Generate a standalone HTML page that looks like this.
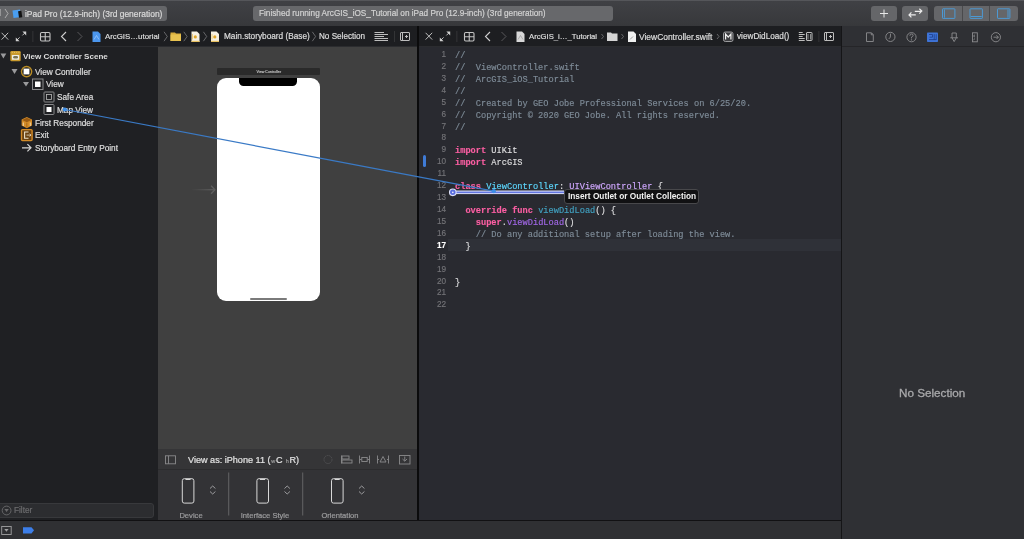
<!DOCTYPE html>
<html><head><meta charset="utf-8">
<style>
*{margin:0;padding:0;box-sizing:border-box}
html,body{width:1024px;height:539px;overflow:hidden;background:#2c2c2e;font-family:"Liberation Sans",sans-serif;position:relative}
.a{position:absolute}
svg{position:absolute;overflow:visible}
.t{position:absolute;will-change:transform;-webkit-text-stroke-width:0.2px;white-space:pre;color:#dcdcdc;font-size:8.2px;line-height:10px}
#tb{left:0;top:0;width:1024px;height:26px;background:linear-gradient(#404145,#37383b);}
.btn{position:absolute;background:#656669;border-radius:3px}
.jb{position:absolute;background:#1d1e21;height:20px;top:26px}
#nav{left:0;top:47px;width:158px;height:473px;background:#1f2023}
#canvas{left:158px;top:47px;width:259px;height:402px;background:#404040}
#code{left:419px;top:47px;width:422px;height:474px;background:#292a30}
#insp{left:842px;top:26px;width:182px;height:513px;background:#2f3034}
#bot{left:0;top:520px;width:841px;height:19px;background:#2f3033}
.mono{position:absolute;will-change:transform;-webkit-text-stroke-width:0.15px;font-family:"Liberation Mono",monospace;font-size:8.675px;line-height:12px;white-space:pre;color:#dfdfe0}
.ln{position:absolute;will-change:transform;-webkit-text-stroke-width:0.15px;font-size:8.2px;line-height:12px;color:#747478;text-align:right;width:40px;left:406px}
.cm{color:#7f8c98}
.kw{color:#fc5fa3;font-weight:bold}
.td{color:#5dd8ff}
.oc{color:#d0a8ff}
.od{color:#41a1c0}
.of{color:#a167e6}
.row{position:absolute;will-change:transform;-webkit-text-stroke-width:0.2px;white-space:pre;color:#dedede;font-size:8.2px;line-height:12px}
</style></head><body>
<!-- toolbar -->
<div id="tb" class="a">
  <div class="a" style="left:0;top:0;width:1024px;height:1px;background:#55565a"></div>
  <div class="btn" style="left:-4px;top:6px;width:171px;height:15px"></div>
  <div class="t" style="left:-1px;top:9px;color:#cfcfcf">l</div>
  <svg style="left:0;top:0" width="30" height="26"><path d="M5 9 L8 13.5 L5 18" fill="none" stroke="#bdbdbd" stroke-width="0.8"/>
    <path d="M12.5 10.5 L20 9.5 L21 17 L13.5 18 Z" fill="#4a9ef0"/><rect x="18.5" y="11" width="3.3" height="6.5" fill="#111" transform="rotate(-8 20 14)"/></svg>
  <div class="t" style="left:25px;top:8.8px;font-size:8.45px;color:#dadada">iPad Pro (12.9-inch) (3rd generation)</div>
  <div class="btn" style="left:253px;top:6px;width:360px;height:15px;background:#67686b"></div>
  <div class="t" style="left:258.5px;top:8.8px;font-size:8.23px;color:#d2d2d2">Finished running ArcGIS_iOS_Tutorial on iPad Pro (12.9-inch) (3rd generation)</div>
  <div class="btn" style="left:871px;top:6px;width:26px;height:15px"></div>
  <svg style="left:871px;top:6px" width="26" height="15"><path d="M13 3.5 V11.5 M9 7.5 H17" stroke="#e8e8e8" stroke-width="1"/></svg>
  <div class="btn" style="left:902px;top:6px;width:26px;height:15px"></div>
  <svg style="left:902px;top:3px" width="26" height="18"><path d="M12.8 8.3 L19.8 8.1 M17.3 5.8 L19.8 8.1 L17.3 10.6 M13.8 11.8 L7 11.9 M9.4 9.4 L7 11.9 L9.4 14.4" fill="none" stroke="#ececec" stroke-width="1.2"/></svg>
  <div class="btn" style="left:934px;top:6px;width:84px;height:15px"></div>
  <div class="a" style="left:962px;top:6px;width:1px;height:15px;background:#4a4a4c"></div>
  <div class="a" style="left:989px;top:6px;width:1px;height:15px;background:#4a4a4c"></div>
  <svg style="left:934px;top:6px" width="84" height="15">
    <g fill="none" stroke="#4a9fe0" stroke-width="0.9">
    <rect x="8.5" y="2.8" width="12.4" height="9.6" rx="0.6"/><path d="M10.4 3.5 V11.7"/>
    <rect x="36" y="2.8" width="12.4" height="9.6" rx="0.6"/><path d="M36.7 10.5 H47.7"/>
    <rect x="63.5" y="2.8" width="12.4" height="9.6" rx="0.6"/><path d="M74 3.5 V11.7"/></g>
  </svg>
</div>
<div class="a" style="left:0;top:25.5px;width:1024px;height:1px;background:#151517"></div>

<!-- left jump bar -->
<div class="jb" style="left:0;width:417px"></div>
<div class="a" style="left:0;top:46px;width:417px;height:1px;background:#2b2c2f"></div>
<svg style="left:0;top:26px" width="417" height="20">
  <g fill="none" stroke="#cfcfcf" stroke-width="0.9">
    <path d="M1.6 6.8 L8.2 13.6 M8.2 6.8 L1.6 13.6"/>
    <path d="M16.6 14.4 L19.6 11.4 M25.4 6.4 L22.4 9.4"/>
    <path d="M66 6 L61.5 10.5 L66 15" stroke-width="1.1"/>
  </g>
  <g fill="#cfcfcf"><path d="M15.8 15.2 V11.4 L19.6 15.2 Z M26.2 5.6 V9.4 L22.4 5.6 Z"/></g>
  <g fill="none" stroke="#c4c4c4" stroke-width="1.1">
    <rect x="40.5" y="6.5" width="9.5" height="8.5" rx="1.2"/><path d="M40.5 10.75 H50 M45.25 6.5 V15"/>
  </g>
  <path d="M77.5 6 L82 10.5 L77.5 15" fill="none" stroke="#5e5e60" stroke-width="0.9"/>
  <rect x="32.5" y="5" width="0.8" height="11" fill="#3a3a3c"/>
  <path d="M92.5 5.5 H98 L100.5 8 V16 H92.5 Z" fill="#4b96ee"/><path d="M94 13.5 L96.5 9.5 L99 13.5" fill="none" stroke="#a8d0ff" stroke-width="0.7"/>
</svg>
<div class="t" style="left:105px;top:32.2px;font-size:7.85px">ArcGIS…utorial</div>
<svg style="left:0;top:26px" width="417" height="20">
  <g fill="none" stroke="#7a7a7c" stroke-width="0.8">
    <path d="M164 5.8 L167.3 10.5 L164 15.2"/><path d="M183.8 5.8 L187.1 10.5 L183.8 15.2"/><path d="M203.4 5.8 L206.7 10.5 L203.4 15.2"/><path d="M312.3 5.8 L315.6 10.5 L312.3 15.2"/>
  </g>
  <path d="M170.5 6.5 H175 L176 7.5 H181 V15 H170.5 Z" fill="#d9ad3c"/><path d="M170.5 8.5 H181 V15 H170.5 Z" fill="#e8c250"/>
  <path d="M191.5 5.5 H197 L199.5 8 V16 H191.5 Z" fill="#f6f0e2"/><path d="M191.5 14.8 H199.5 V16 H191.5 Z" fill="#e8c060"/><circle cx="195.3" cy="10.9" r="1.6" fill="#dfa52a"/><path d="M192.5 8 V13.5" stroke="#e8c060" stroke-width="0.8"/>
  <path d="M211 5.5 H216.5 L219 8 V16 H211 Z" fill="#f6f0e2"/><path d="M211 14.8 H219 V16 H211 Z" fill="#e8c060"/><circle cx="214.8" cy="10.9" r="1.6" fill="#dfa52a"/><path d="M212 8 V13.5" stroke="#e8c060" stroke-width="0.8"/>
  <g fill="none" stroke="#bdbdbd" stroke-width="1">
    <path d="M374.5 6.5 H384 M374.5 8.5 H388 M374.5 10.5 H384 M374.5 12.5 H388 M374.5 14.5 H388"/>
    <rect x="400.5" y="6.5" width="9" height="8" rx="0.5"/><path d="M402.5 6.5 V14.5 M405 10.5 H408 M406.5 9 V12"/>
  </g>
  <rect x="394" y="5" width="0.8" height="11" fill="#3a3a3c"/>
</svg>
<div class="t" style="left:223.5px;top:32.2px;font-size:8.25px">Main.storyboard (Base)</div>
<div class="t" style="left:319px;top:32.2px;font-size:8.15px">No Selection</div>

<!-- right jump bar -->
<div class="jb" style="left:419px;width:422px"></div>
<div class="a" style="left:419px;top:46px;width:422px;height:1px;background:#2b2c2f"></div>
<svg style="left:424px;top:26px" width="417" height="20">
  <g fill="none" stroke="#cfcfcf" stroke-width="0.9">
    <path d="M1.6 6.8 L8.2 13.6 M8.2 6.8 L1.6 13.6"/>
    <path d="M16.6 14.4 L19.6 11.4 M25.4 6.4 L22.4 9.4"/>
    <path d="M66 6 L61.5 10.5 L66 15" stroke-width="1.1"/>
  </g>
  <g fill="#cfcfcf"><path d="M15.8 15.2 V11.4 L19.6 15.2 Z M26.2 5.6 V9.4 L22.4 5.6 Z"/></g>
  <g fill="none" stroke="#c4c4c4" stroke-width="1.1">
    <rect x="40.5" y="6.5" width="9.5" height="8.5" rx="1.2"/><path d="M40.5 10.75 H50 M45.25 6.5 V15"/>
  </g>
  <path d="M77.5 6 L82 10.5 L77.5 15" fill="none" stroke="#5e5e60" stroke-width="0.9"/>
  <rect x="32.5" y="5" width="0.8" height="11" fill="#3a3a3c"/>
  <path d="M92.5 5.5 H98 L100.5 8 V16 H92.5 Z" fill="#d8d8d8"/><path d="M94 13.5 L96.5 9.5 L99 13.5" fill="none" stroke="#999" stroke-width="0.7"/>
</svg>
<div class="t" style="left:529px;top:32.2px;font-size:7.7px">ArcGIS_i…_Tutorial</div>
<svg style="left:0;top:26px" width="842" height="20">
  <g fill="none" stroke="#7a7a7c" stroke-width="0.8">
    <path d="M601.5 8 L603.5 10.5 L601.5 13"/><path d="M621.5 8 L623.5 10.5 L621.5 13"/><path d="M717 8 L719 10.5 L717 13"/>
  </g>
  <path d="M607 6.5 H611 L612 7.5 H617.5 V15 H607 Z" fill="#d5d5d5"/>
  <path d="M628 5.5 H633.5 L636 8 V16 H628 Z" fill="#f0f0f0"/><path d="M630 13.5 L633 10.5" stroke="#888" stroke-width="0.8"/>
  <rect x="723.5" y="6" width="9.5" height="9.5" rx="1.8" fill="#3c3c3f" stroke="#a8a8aa" stroke-width="0.9"/>
  <path d="M725.6 13.4 V8.1 L728.25 11.2 L730.9 8.1 V13.4" fill="none" stroke="#f2f2f2" stroke-width="1.2"/>
  <g fill="none" stroke="#cfcfcf" stroke-width="0.9">
  </g><g fill="none" stroke="#bdbdbd" stroke-width="1">
    <path d="M798.8 6.5 H802.7 M798.8 8.5 H804.7 M798.8 10.5 H802.7 M798.8 12.5 H804.7 M798.8 14.5 H804.7"/><rect x="806.5" y="6.5" width="5.5" height="8" rx="0.5"/><path d="M808 8 V13.5 M810.5 8 V13.5" stroke-width="0.7"/>
    <rect x="824.5" y="6.5" width="9" height="8" rx="0.5"/><path d="M826.5 6.5 V14.5 M829 10.5 H832 M830.5 9 V12"/>
  </g>
  <rect x="818.5" y="5" width="0.8" height="11" fill="#3a3a3c"/>
</svg>
<div class="t" style="left:639px;top:32.2px;font-size:8.45px">ViewController.swift</div>
<div class="t" style="left:736.5px;top:32.2px;font-size:8.2px">viewDidLoad()</div>

<!-- navigator -->
<div id="nav" class="a"></div>
<svg style="left:0;top:46px" width="158" height="474">
  <g fill="#9a9a9c">
    <path d="M0.5 7.6 H6.3 L3.4 12.6 Z"/>
    <path d="M11.5 22.9 H17.5 L14.5 28 Z"/>
    <path d="M23 35.9 H29 L26 40.5 Z"/>
  </g>
  <!-- scene icon -->
  <rect x="10.3" y="4.9" width="10.4" height="10.4" rx="1.3" fill="#c99a2e"/>
  <path d="M11.8 6.4 H12.8 M14 6.4 H15 M16.2 6.4 H17.2 M18.4 6.4 H19.4" stroke="#f0d070" stroke-width="0.8"/>
  <rect x="11.9" y="8.9" width="7.3" height="4.9" rx="0.6" fill="#efefe8"/>
  <rect x="13.2" y="10" width="4.8" height="2.6" rx="1.3" fill="#7a7552"/>
  <!-- view controller icon -->
  <circle cx="26.6" cy="25.6" r="5.1" fill="none" stroke="#b88c26" stroke-width="1.4"/>
  <rect x="23.6" y="22.6" width="5.8" height="5.8" fill="#fff"/>
  <!-- view icon -->
  <rect x="32.5" y="33" width="10.5" height="10.5" fill="none" stroke="#8a8a8c" stroke-width="1"/>
  <rect x="35" y="35.5" width="5.5" height="5.5" fill="#fff"/>
  <!-- safe area -->
  <rect x="44" y="46" width="10" height="10" rx="0.8" fill="none" stroke="#8a8a8c" stroke-width="1"/>
  <rect x="46.5" y="48.5" width="5" height="5" fill="none" stroke="#bbb" stroke-width="0.8"/>
  <!-- map view -->
  <rect x="44" y="58.5" width="10" height="10" rx="0.8" fill="none" stroke="#8a8a8c" stroke-width="1"/>
  <rect x="46.5" y="61" width="5" height="5" fill="#fff"/>
  <!-- first responder -->
  <path d="M26.8 71 L32 73.6 V79.6 L26.8 82.2 L21.6 79.6 V73.6 Z" fill="#d48c28"/>
  <path d="M22.2 74 L26.8 76.3 L31.4 74 L26.8 71.7 Z" fill="#9a5c14"/>
  <path d="M23.3 76.5 V80 M30.3 76.5 V80" stroke="#f2d8a8" stroke-width="1"/>
  <path d="M26.8 76.8 V81.5" stroke="#8a5210" stroke-width="0.6"/>
  <!-- exit -->
  <rect x="21.5" y="83.6" width="10.6" height="11" rx="1" fill="#6a4212" stroke="#d48c28" stroke-width="1.4"/>
  <path d="M28.5 86 H24.6 V92.2 H28.5" fill="none" stroke="#eee3cc" stroke-width="1.1"/>
  <path d="M26.5 89.1 H31 M29.6 87.8 L31 89.1 L29.6 90.4" fill="none" stroke="#eee3cc" stroke-width="0.8"/>
  <!-- entry arrow -->
  <path d="M22 101.8 H31 M27.4 98.2 L31 101.8 L27.4 105.4" fill="none" stroke="#d4d4d4" stroke-width="1.2"/>
</svg>
<div class="row" style="left:23.4px;top:51px;font-weight:bold;font-size:8.05px;-webkit-text-stroke-width:0">View Controller Scene</div>
<div class="row" style="left:34.5px;top:66.5px;font-size:8.25px">View Controller</div>
<div class="row" style="left:46px;top:79px;font-size:8.25px">View</div>
<div class="row" style="left:57.2px;top:92px;font-size:8.25px">Safe Area</div>
<div class="row" style="left:57.2px;top:104.5px;font-size:8.25px">Map View</div>
<div class="row" style="left:34.5px;top:117.5px;font-size:8.25px">First Responder</div>
<div class="row" style="left:34.5px;top:130px;font-size:8.25px">Exit</div>
<div class="row" style="left:34.5px;top:143px;font-size:8.25px">Storyboard Entry Point</div>
<!-- filter -->
<div class="a" style="left:-3px;top:503px;width:157px;height:14.5px;background:#2c2d30;border-radius:3px;border:1px solid #38393c"></div>
<svg style="left:0;top:503px" width="20" height="15"><circle cx="6.6" cy="7.5" r="4.4" fill="none" stroke="#6a6a6c" stroke-width="0.9"/><path d="M4.4 6 H8.8 L6.6 9 Z" fill="#6a6a6c"/></svg>
<div class="t" style="left:13.8px;top:505.5px;color:#6c6c6e;font-size:8.2px">Filter</div>
<!-- canvas -->
<div id="canvas" class="a"></div>
<div class="a" style="left:216.5px;top:67.8px;width:103.6px;height:6.8px;background:#2a2a2a;border-radius:1px"></div>
<div class="t" style="left:216.5px;top:68.6px;width:103.6px;text-align:center;font-size:3.65px;line-height:6px;color:#c8c8c8;-webkit-text-stroke-width:0.12px">View Controller</div>
<div class="a" style="left:216.6px;top:77.5px;width:103.4px;height:223.8px;background:#fff;border-radius:9px"></div>
<div class="a" style="left:239.4px;top:77.5px;width:57.7px;height:8.8px;background:#000;border-radius:0 0 4.5px 4.5px"></div>
<div class="a" style="left:249.5px;top:297.8px;width:37px;height:2px;background:#7a7a7a;border-radius:1px"></div>
<svg style="left:158px;top:46px" width="259" height="403">
  <defs><linearGradient id="ag" gradientUnits="userSpaceOnUse" x1="33" y1="0" x2="57" y2="0"><stop offset="0" stop-color="#404040"/><stop offset="1" stop-color="#5e5e5e"/></linearGradient></defs>
  <path d="M33 143.7 H56.6" stroke="url(#ag)" stroke-width="1.3"/>
  <path d="M53.1 139.7 L56.9 143.7 L53.1 147.7" fill="none" stroke="#5e5e5e" stroke-width="1.3"/>
</svg>
<!-- view as bar -->
<div class="a" style="left:158px;top:449px;width:259px;height:20px;background:#353537"></div>
<div class="a" style="left:158px;top:468.5px;width:259px;height:1px;background:#2c2c2e"></div>
<div class="a" style="left:158px;top:469.5px;width:259px;height:50.5px;background:#333336"></div>
<svg style="left:158px;top:449px" width="259" height="71">
  <g fill="none" stroke="#8a8a8c" stroke-width="0.9">
    <rect x="7.5" y="6.8" width="10" height="8"/><path d="M10.5 6.8 V14.8"/>
  </g>
  <g fill="none" stroke="#59595b" stroke-width="0.9" stroke-dasharray="1.2 1">
    <circle cx="170" cy="10.5" r="4"/>
  </g>
  <g fill="none" stroke="#8a8a8c" stroke-width="0.9">
    <path d="M183.5 6.5 V14.5"/><rect x="184" y="7" width="7" height="3"/><rect x="184" y="11" width="10" height="3"/>
    <path d="M201.5 6.5 V14.5 M211.5 6.5 V14.5 M201.5 10.5 H203.5 M209.5 10.5 H211.5"/><rect x="203.8" y="8.5" width="5.4" height="4"/>
    <path d="M219.5 6.5 V14.5 M230.5 6.5 V14.5 M219.5 10.5 H221 M229 10.5 H230.5 M222 13 L225 7.5 L228 13 Z"/>
    <rect x="241.5" y="6.5" width="10.5" height="8.5"/><path d="M246.75 7.5 V12 M244.5 10 L246.75 12.2 L249 10"/>
  </g>
  <!-- phones -->
  <g fill="none" stroke="#d8d8d8" stroke-width="1">
    <rect x="24.3" y="29.7" width="11.6" height="24.4" rx="2"/>
    <rect x="98.9" y="29.7" width="11.6" height="24.4" rx="2"/>
    <rect x="173.5" y="29.7" width="11.6" height="24.4" rx="2"/>
  </g>
  <g fill="#d8d8d8"><rect x="27.5" y="30" width="5" height="1"/><rect x="102" y="30" width="5" height="1"/><rect x="176.7" y="30" width="5" height="1"/></g>
  <g fill="none" stroke="#a8a8aa" stroke-width="0.9">
    <path d="M52 39.5 L54.7 37 L57.4 39.5 M52 42.5 L54.7 45 L57.4 42.5"/>
    <path d="M126.5 39.5 L129.2 37 L131.9 39.5 M126.5 42.5 L129.2 45 L131.9 42.5"/>
    <path d="M201 39.5 L203.7 37 L206.4 39.5 M201 42.5 L203.7 45 L206.4 42.5"/>
  </g>
  <rect x="70.3" y="23.5" width="0.9" height="43" fill="#6a6a6c"/>
  <rect x="144.3" y="23.5" width="0.9" height="43" fill="#6a6a6c"/>
</svg>
<div class="t" style="left:188px;top:454.5px;font-size:9.1px;color:#e2e2e2">View as: iPhone 11 (<span style="font-size:5.5px;color:#9a9a9a;margin:0 0.8px 0 0.6px">w</span>C <span style="font-size:5.5px;color:#9a9a9a;margin:0 0.8px 0 0.6px">h</span>R)</div>
<div class="t" style="left:160px;top:510.5px;width:62px;text-align:center;font-size:7.6px;color:#9c9c9e">Device</div>
<div class="t" style="left:234px;top:510.5px;width:62px;text-align:center;font-size:7.6px;color:#9c9c9e">Interface Style</div>
<div class="t" style="left:309px;top:510.5px;width:62px;text-align:center;font-size:7.6px;color:#9c9c9e">Orientation</div>
<div class="a" style="left:417px;top:26px;width:2px;height:494px;background:#0b0b0c"></div>
<div id="code" class="a"></div>
<div class="a" style="left:448px;top:238.5px;width:393px;height:12px;background:#2f3138"></div>
<div class="a" style="left:422.5px;top:154.5px;width:3px;height:12px;background:#3f7bd6;border-radius:1.5px"></div>
<div class="ln" style="top:48.7px;line-height:11.92px">1<br>2<br>3<br>4<br>5<br>6<br>7<br>8<br>9<br>10<br>11<br>12<br>13<br>14<br>15<br>16<br><b style="color:#fff">17</b><br>18<br>19<br>20<br>21<br>22</div>
<div class="mono" style="left:455.4px;top:50.5px;line-height:11.92px"><span class="cm">//
//  ViewController.swift
//  ArcGIS_iOS_Tutorial
//
//  Created by GEO Jobe Professional Services on 6/25/20.
//  Copyright © 2020 GEO Jobe. All rights reserved.
//</span>

<span class="kw">import</span> UIKit
<span class="kw">import</span> ArcGIS

<span class="kw">class</span> <span class="td">ViewController</span>: <span class="oc">UIViewController</span> {

  <span class="kw">override</span> <span class="kw">func</span> <span class="od">viewDidLoad</span>() {
    <span class="kw">super</span>.<span class="of">viewDidLoad</span>()
    <span class="cm">// Do any additional setup after loading the view.</span>
  }


}


</div>
<div class="a" style="left:841px;top:26px;width:1px;height:513px;background:#151517"></div>
<div id="insp" class="a"></div>
<div class="a" style="left:842px;top:45.5px;width:182px;height:1px;background:#252528"></div>
<svg style="left:842px;top:26.4px" width="182" height="20">
  <g fill="none" stroke="#8c8c8e" stroke-width="0.9">
    <path d="M24.5 6.8 H29.5 L31.3 8.6 V15.5 H24.5 Z"/><path d="M29.3 7 V8.8 H31" />
    <circle cx="48.4" cy="10.9" r="4.6"/><path d="M48.6 7.6 L48.3 11.2 L46.8 12.9"/>
    <circle cx="69.5" cy="11.2" r="4.6"/><path d="M67.9 9.8 Q67.9 8 69.5 8 Q71.1 8 71.1 9.5 Q71.1 10.6 69.5 11.1 V12.4"/><circle cx="69.5" cy="13.9" r="0.3"/>
    <path d="M110 7 H114.3 V11.8 M110 7 V11.8 M108.3 11.8 H116 M110 11.8 L112.15 15.6 L114.3 11.8"/>
    <rect x="130.5" y="6.8" width="4.8" height="9" /><path d="M133 8.8 L131.5 10 L133 11.2 M133 12.6 L131.5 13.8"/>
    <circle cx="153.9" cy="11.2" r="4.6"/><path d="M151.5 11.2 H156.4 M154.5 9.3 L156.4 11.2 L154.5 13.1"/>
  </g>
  <rect x="85" y="6.6" width="11" height="9.4" rx="0.8" fill="#3e73d6"/>
  <g fill="none" stroke="#1d3c8a" stroke-width="0.8"><path d="M87 8.5 H90.5 V11.2 H87.5 M92.2 8.2 V14 M94.2 8.2 V14 M87 13.6 H94"/></g>
</svg>
<div id="bot" class="a"></div>
<svg style="left:0;top:521px" width="60" height="18">
  <rect x="1.7" y="5.5" width="9.5" height="8" fill="none" stroke="#a0a0a2" stroke-width="0.9"/>
  <path d="M4.3 8 H8.6 L6.45 10.7 Z" fill="#a0a0a2"/>
  <path d="M23 6.3 H31.5 L34 9.3 L31.5 12.5 H23 Z" fill="#3c7ee8"/>
</svg>
<!-- connection overlay -->
<svg style="left:0;top:0" width="1024" height="539">
  <rect x="455" y="190.5" width="109" height="3.6" fill="#d9dcf6"/>
  <rect x="455" y="191.6" width="109" height="1.5" fill="#6275e0"/>
  <path d="M64.8 109.5 L493.8 191.2" stroke="#3a7ac6" stroke-width="1.2" fill="none"/>
  <circle cx="64.8" cy="109.5" r="2.1" fill="#3d8ee6"/>
  <circle cx="452.8" cy="192.3" r="3.3" fill="#5a6ee0" stroke="#dfe2f8" stroke-width="1.1"/>
  <circle cx="452.8" cy="192.3" r="0.9" fill="#e8eafa"/>
  <circle cx="493.8" cy="191.2" r="2.1" fill="#3d8ee6"/>
</svg>
<div class="a" style="left:564px;top:188.5px;width:135px;height:15px;background:#111113;border:1px solid #48484b;border-radius:3px"></div>
<div class="t" style="left:567.6px;top:191.2px;font-weight:bold;font-size:8.3px;color:#f2f2f2;-webkit-text-stroke-width:0">Insert Outlet or Outlet Collection</div>
<div class="a" style="left:0;top:520px;width:841px;height:1px;background:#111113"></div>
<div class="t" style="left:898.8px;top:385.8px;font-size:11.7px;line-height:13px;color:#a9a9ab;-webkit-text-stroke:0.3px #a9a9ab">No Selection</div>
</body></html>
